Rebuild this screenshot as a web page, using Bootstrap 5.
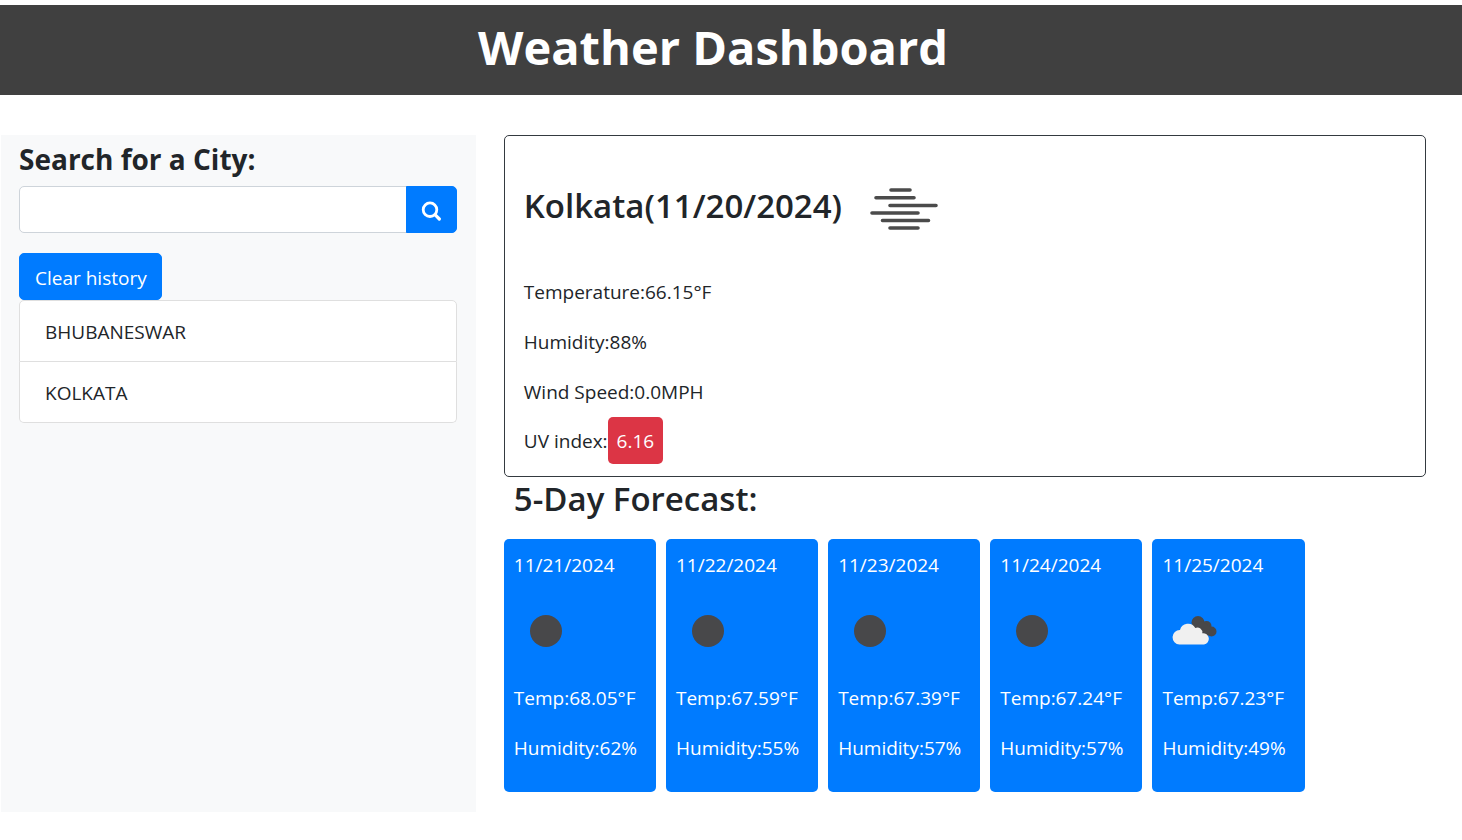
<!DOCTYPE html>
<html lang="en">
<head>
<meta charset="utf-8">
<meta name="viewport" content="width=device-width, initial-scale=1">
<title>Weather Dashboard</title>
<link href="https://cdn.jsdelivr.net/npm/bootstrap@5.3.0/dist/css/bootstrap.min.css" rel="stylesheet">
<style>
  body { font-family: "Open Sans", "Noto Sans", sans-serif; font-size: 19px; line-height: 30px; color: #212529; background: #fff; }
  h1, h2, h3 { line-height: 1.2; }
  .page-title { background: #404040; color: #fff; margin-top: 5px; height: 90px; padding: 14px 36px 0 0; }
  .page-title h1 { font-size: 47px; font-weight: 700; }
  .layout { margin-top: 40px; padding-left: 1px; gap: 28px; }
  .search-panel { width: 32.5%; min-height: 677px; background: #f8f9fa; padding: 6px 19px 0 18px; }
  .search-panel h2 { font-size: 28px; font-weight: 700; line-height: 36px; margin-bottom: 9px; }
  .form-control, .btn { height: 47px; border-radius: 5px; font-size: 19px; }
  .form-control { border-color: #ced4da; }
  .btn-primary { --bs-btn-bg: #007bff; --bs-btn-border-color: #007bff; padding: 3px 14px 0 15px; }
  .search-btn { width: 51px; padding: 0; }
  .history { --bs-list-group-border-radius: 5px; --bs-list-group-border-color: #dfdfdf; --bs-list-group-item-padding-x: 25px; }
  .history .list-group-item { padding-top: 16px; padding-bottom: 14px; }
  .main-panel { margin-right: 36px; min-width: 0; }
  .today { border: 1px solid #343a40; border-radius: 5px; padding: 11px 19px 12px; }
  .today-head { margin-bottom: 5px; }
  .today h3, .forecast-title { font-size: 33px; font-weight: 600; }
  .line { margin-bottom: 20px; }
  .wind { margin-bottom: 10px; }
  .uv { background: #dc3545; color: #fff; border-radius: 5px; height: 47px; line-height: 49px; padding: 0 9px; }
  .forecast-title { line-height: 42px; padding-left: 10px; margin: 1px 0 19px; }
  .days { gap: 10px; }
  .day { width: 16.5%; background: #007bff; color: #fff; border-radius: 5px; padding: 11px 0 9px 10px; white-space: nowrap; }
  .day svg { display: block; margin-bottom: 20px; }
</style>
</head>
<body>
<header class="page-title text-center"><h1 class="mb-0">Weather Dashboard</h1></header>
<div class="layout d-flex">
  <aside class="search-panel flex-shrink-0">
    <h2><label for="city">Search for a City:</label></h2>
    <div class="input-group line">
      <input id="city" type="text" class="form-control">
      <button class="btn btn-primary search-btn" type="button" aria-label="Search">
        <svg width="20" height="20" viewBox="0 0 20 20" fill="none" stroke="#fff" stroke-linecap="round"><circle cx="9" cy="8.7" r="6.800" stroke-width="2.800"/><path d="M14.500 14.200l3.800 3.800" stroke-width="3.200"/></svg>
      </button>
    </div>
    <button class="btn btn-primary d-block" type="button">Clear history</button>
    <ul class="list-group history">
      <li class="list-group-item">BHUBANESWAR</li>
      <li class="list-group-item">KOLKATA</li>
    </ul>
  </aside>
  <main class="main-panel flex-grow-1">
    <section class="today">
      <div class="today-head d-flex align-items-center">
        <h3 class="mb-2">Kolkata(11/20/2024)</h3>
        <svg width="125" height="125" viewBox="0 0 125 125" fill="none" stroke="#4b4b4b" stroke-width="3.6" stroke-linecap="round"><path d="M49 43h19M34 50.700h38M48 58.500h46M30 66h46M40.500 73.500h46M48 81h28"/></svg>
      </div>
      <p class="line">Temperature:66.15°F</p>
      <p class="line">Humidity:88%</p>
      <p class="wind">Wind Speed:0.0MPH</p>
      <p class="d-flex align-items-center mb-0">UV index:<span class="uv">6.16</span></p>
    </section>
    <h3 class="forecast-title">5-Day Forecast:</h3>
    <div class="days d-flex">
      <article class="day">
        <p class="line">11/21/2024</p>
        <svg width="63" height="63" viewBox="0 0 63 63"><circle cx="32" cy="31" r="16" fill="#48484a"/></svg>
        <p class="line">Temp:68.05°F</p>
        <p class="line">Humidity:62%</p>
      </article>
      <article class="day">
        <p class="line">11/22/2024</p>
        <svg width="63" height="63" viewBox="0 0 63 63"><circle cx="32" cy="31" r="16" fill="#48484a"/></svg>
        <p class="line">Temp:67.59°F</p>
        <p class="line">Humidity:55%</p>
      </article>
      <article class="day">
        <p class="line">11/23/2024</p>
        <svg width="63" height="63" viewBox="0 0 63 63"><circle cx="32" cy="31" r="16" fill="#48484a"/></svg>
        <p class="line">Temp:67.39°F</p>
        <p class="line">Humidity:57%</p>
      </article>
      <article class="day">
        <p class="line">11/24/2024</p>
        <svg width="63" height="63" viewBox="0 0 63 63"><circle cx="32" cy="31" r="16" fill="#48484a"/></svg>
        <p class="line">Temp:67.24°F</p>
        <p class="line">Humidity:57%</p>
      </article>
      <article class="day">
        <p class="line">11/25/2024</p>
        <svg width="63" height="63" viewBox="0 0 63 63">
          <g fill="#48484a"><circle cx="36" cy="22.500" r="6.500"/><circle cx="44.500" cy="26" r="5"/><circle cx="49.500" cy="31.500" r="5"/><path d="M31 27l9-6 10 7-4 8-10-2z"/></g>
          <path fill="#f0f0f0" d="M17.500 44.500a7.200 7.200 0 0 1 .5-14.400a8.300 8.300 0 0 1 15.300-2.200a5 5 0 0 1 7 5.300a5.700 5.700 0 0 1 1.700 11.300z"/>
        </svg>
        <p class="line">Temp:67.23°F</p>
        <p class="line">Humidity:49%</p>
      </article>
    </div>
  </main>
</div>
<script src="https://cdn.jsdelivr.net/npm/bootstrap@5.3.0/dist/js/bootstrap.bundle.min.js"></script>
</body>
</html>
